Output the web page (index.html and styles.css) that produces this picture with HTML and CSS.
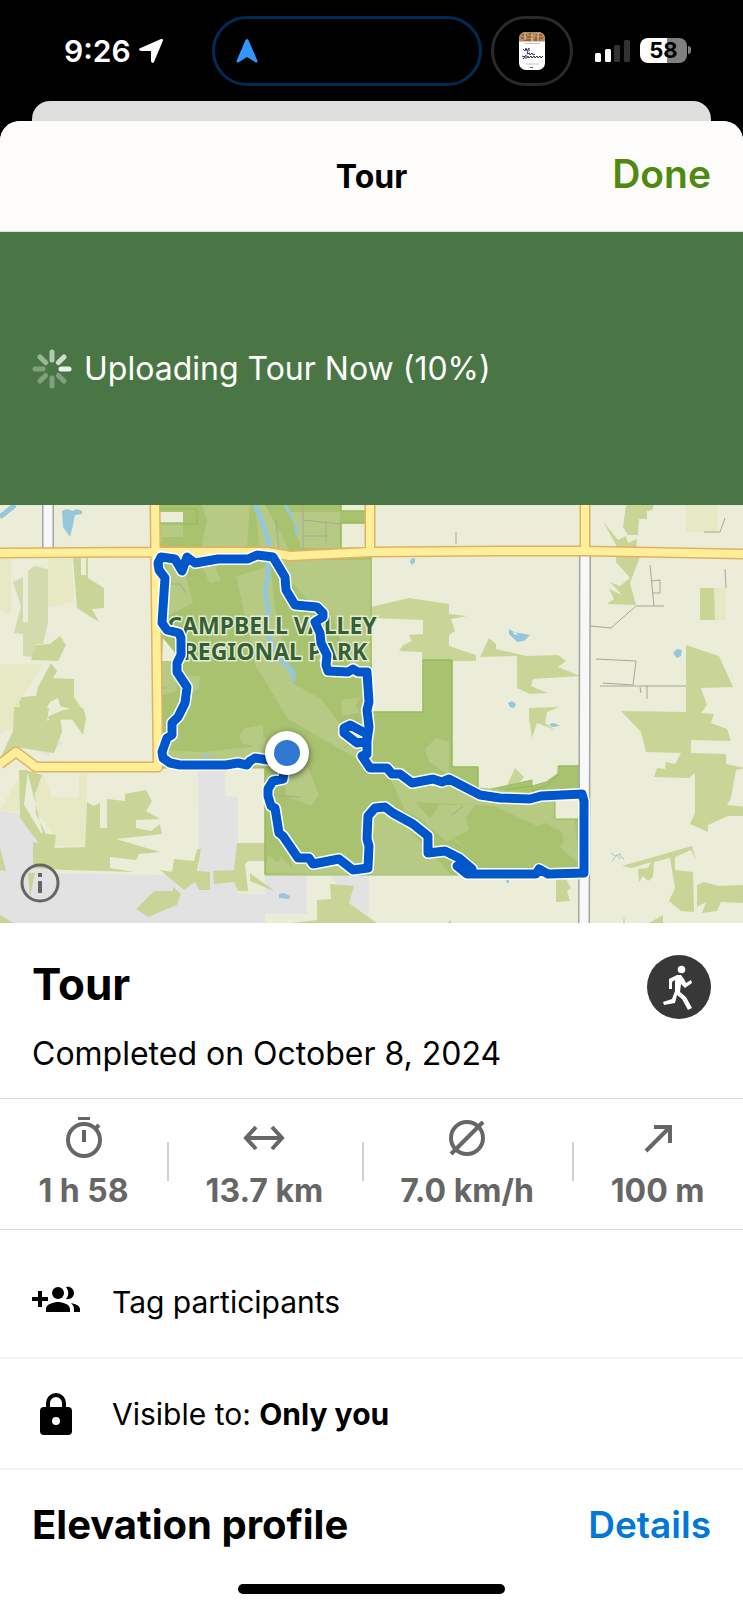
FILE: index.html
```html
<!DOCTYPE html>
<html lang="en">
<head>
  <meta charset="UTF-8" />
  <title>Tour</title>
  <meta name="viewport" content="width=device-width, initial-scale=1.0"/>
  <link rel="stylesheet" href="styles.css">
</head>
<body>
  <div class="status-bar">
    <div class="clock">
      <span>9:26</span>
      <svg class="location" viewBox="0 0 24 24"><path d="M24 1.500 15 23q-1.500 2-3-.5V12H2Q-1 11 .5 9.500L22 0q2-.5 2 1.500z" fill="#fff"/></svg>
    </div>
    <div class="island">
      <svg viewBox="0 0 22 24"><path d="M11 0q1.200 0 1.700 1.500L21.500 22q.2 2-1.700 1.500L11 18 2.200 23.500Q.3 24 .5 22L9.300 1.500Q9.800 0 11 0z" fill="#2f97ff"/></svg>
    </div>
    <div class="island-small">
      <svg viewBox="0 0 26 38">
        <rect width="26" height="38" rx="7" fill="#fff"/>
        <path d="M0 9.500V7q0-7 7-7h12q7 0 7 7v2.500z" fill="#b98a5b"/>
        <path d="M3 3h5M10 2h4M17 3h6M2 6h4M8 5h6M16 6h8M5 8h7M15 8h6" stroke="#6f4524" stroke-width="1"/>
        <path d="M6 1v7M13 1v8M19 1v8" stroke="#e4cfaa" stroke-width="1"/>
        <path d="M6 11.500h15M7 32h13" stroke="#aaa" stroke-width=".7"/>
        <path d="M4 17l2 2 1-3 1 3 2-3v3M9 19l-1 3 3-1M3 24l3 1-2 2 3-4v4" stroke="#35357e" stroke-width="1" fill="none"/>
        <path d="M10 21l1 2 2-2 1 2 2-1M8 26l1-2 1 2 2-2 1 2 2-2 1 2 2-2 1 2 2-2 1 2 2-2" stroke="#333" stroke-width="1" fill="none"/>
        <path d="M11 35.500h3" stroke="#555" stroke-width="1"/>
      </svg>
    </div>
    <div class="signal">
      <svg class="bars" viewBox="0 0 35 22">
        <rect y="13" width="6" height="9" rx="1.500" fill="#fff"/>
        <rect x="10" y="9" width="6" height="13" rx="1.500" fill="#fff"/>
        <rect x="19" y="5" width="6" height="17" rx="1.500" fill="#333"/>
        <rect x="29" width="6" height="22" rx="1.500" fill="#333"/>
      </svg>
      <div class="battery">58</div>
    </div>
  </div>

  <div class="sheet-behind"></div>
  <main class="sheet">
    <header>
      <h1>Tour</h1>
      <button class="done">Done</button>
    </header>

    <div class="upload" role="status">
      <svg viewBox="0 0 40 40" stroke="#fff" stroke-width="5" stroke-linecap="round">
        <path d="M29 20h8" opacity=".9"/>
        <path d="M26.400 13.600l5.600-5.600" opacity=".75"/>
        <path d="M20 11V3" opacity=".6"/>
        <path d="M13.600 13.600L8 8" opacity=".45"/>
        <path d="M11 20H3" opacity=".3"/>
        <path d="M13.600 26.400L8 32M20 29v8M26.400 26.400L32 32" opacity=".3"/>
      </svg>
      <span>Uploading Tour Now (10%)</span>
    </div>

    <div class="map">
      <svg class="map-canvas" viewBox="0 505 743 418">
        <defs>
          <path id="roads" d="M0 553l155-1h95l17 0 23 4 80-4 130-1h85l158 3M370 505v46M585 505v46M155 505l3 262H36l-20-15-16 12"/>
          <path id="track" d="M287 753l-7 7h-12l-13-2-5 3-3 4-9-2-12 2h-46l-10-2-7-5-1-6 5-14 5-3v-12l6-6 7-14 2-16-10-15v-9l4-8v-17l-2-5-12-3-5-7 3-45-6-8-1-7 3-6 14 2 7 12 5-14 8 6 23-4h30l9-4 16 2 12 20 1 13 9 15 22 2 6 6v4l-8 5 5 11 1 10 6 12-1 10 2 6 20 1 5-3 5 3h9l2 30-2 8 2 17-2 14-10 2-13-10v-5l6-3 17 9v20l-5 2 8 12h17l5 6h8l12 9 21-4 9 3 7-3 31 16 20 3 30 1 11-3 41-2 2 7v72l-36 1-9-5-3 5h-69l-10-8 15 3-13-11-14-7-17 2v-17l-15-12-20-11-8-6-10 1-7 8-1 23 2 7-1 22-15 2-14-11-26 5-4-6h-11l-15-22-4-3-4-25-4-2-3-10v-7l5-8 10-2z"/>
        </defs>
        <rect y="505" width="743" height="418" fill="#ebedd8"/>

        <!-- fields -->
        <g fill="#e6e9c3">
          <path d="M0 559h11v56l-11-4zM48 559h24l2 43-26 5zM0 664h43l-20 32-2 28-21 10zM0 810l17-29 5 10-4 21zM36 780l7-5 9 22h27v-24h8l-2 73H53l-1-13-16-22z"/>
          <path d="M686 505h32v27h-32zM714 588h12v32h-12z"/>
        </g>

        <!-- built-up areas -->
        <g fill="#e2e2e2">
          <path d="M0 811l20 3 27 29 4 30 110 2 10-5h28l-1-100h27v26l13 1v97h27v36h-17v13H0z"/>
          <path d="M26 744l32-20-2 16 8 3-11 6-5 7zM265 876h42v38h-42zM331 876h38v40l-20-13z"/>
          <path d="M225 771h40v19h-27l-13 5z" fill="#ebedd8"/>
        </g>

        <!-- forest -->
        <g fill="#c9d597">
          <path d="M13 582l10-5v45h5v-51l6-5 14 3v54l-5 21h-7v13l-13-1v-22l-9-1 7-27z" fill="#d3dbae"/>
          <path d="M36 645l14-1 10-8 6 9-8 16-27-1zM73 558h8v17h5v-17h2v20l16 10v20l-12 1 7 13-22-14z"/>
          <path d="M51 663l6 8-4 7 21 1v18l11 16-3 7-20-1 8-10-10-3-2-8-8 4-5 9-24 1-2-10 3-5 14-1 2-9z"/>
          <path d="M14 707l35 1-2 13 13-8 2 19-8 21-39-6-11 13-4-1 13-28zM19 770h9l-4 35 17 28 15 2-3 23-20-1v-15l4 5 1-5-18-24zM27 770l15 5-7 19 1 20 10 20 7 1v13l32-1 2-45 6 4 7-3v25h7v-29l18 2v-7l21-4 6 11-6 10 14 8-24 1v8l15 3 9-7 2 10-46 5 44 13-21 2-3 6-26-3v11l24 4-69-2-32-2V842l13 4zM63 710l20-2 3 10-3 17-11-16-13 1-3 7-9-10z"/>
          <path d="M0 848l6 23-6-1zM0 915l14 8H0zM28 873h7l-5 24zM136 909l18-18h19v-4l8 7-4 11-29 12zM160 870l12 2 2-13 20 2 3-12h4l-4 22 13 1v18h-11l-4-8-11 8zM213 871l21-1 3-27h28v18h-17l-3 3 1 9 2 18h-10l-4-9-20 2zM250 873l26 19-26-11zM330 884l24 2-5 17 28 20h-87l27-3v-20l14-1z"/>
          <path d="M371 607l38-9 40 6v10l18 2-16 3 4 12-6 4v11l27 9v6h-54v-9l-23-1 4-6 9-4-3-6 14-1v-14l-51-2zM480 657l9-19 7 6v5l31 7 31-1 8 6-8 6 22 9-47 3-2 7 17 7-18 1-13-6v-32z"/>
          <path d="M626 505h28l-2 5-5 1v8h-8l-1 16h-10l-5-8zM603 521l15 19 8-4 2 7 9-4-1 15 4 3-10 26 6 22-29-1 7-5-5-10 13 6-12-13 10 4 10-8-14-16v-17z"/>
          <path d="M700 588h14l1 32h-15zM686 645l33 11 14 31-32 1 6 17-6 8-15-1zM621 711l65 1 28 2-3 9 16 6 4 12-40-1v13l35 1v10l19 4-9 2-5 28-4 7 22 2v9h-21l-20 9v7l-18-8 5-11v-40l-6 5-35-1 3-9 8 1 1-7 9 2 6-11-35-1-5-20z"/>
          <path d="M529 708l30-1-12 5-2 11 10 7-18-7-5 15-3-20zM515 768l9 9-5 6 12 1-26 6zM622 866l70-20 4 14-5-10-16 7v13l18 2 1 40-13-1-12-10 6-13-5-30-16 4-1 15-5 4-5-5-4 6-1-13 10-1 3-6-19 6zM697 885l7-3 15 4 24-1v18l-22-1-4 9-15 2 4-11-9 5zM556 879h10l5 9-4 3 3 10-14 1zM649 923l14-8v8zM624 916l1 7h-2zM447 923l4-3v3z"/>
        </g>

        <!-- Campbell Valley park -->
        <path d="M160 505h181v6h30v12h-30v25h30v164h52v-52h29v107h26v25l27-6 27-6v6l14-4 13-9v-7h21v108H265V768H160z" fill="#a8c270" stroke="#9dbd65" stroke-width="1"/>
        <g fill="#b6ca83">
          <path d="M160 516h23v21h-20l-3 10zM202 505h48l-3 43h-46l6-28zM265 505l25 46h-30l-5-46zM290 512h50v36h-39zM167 563l18 10 8 30-28 14zM200 563l10 20 11-2-8-20zM273 560h98v110l-20-3-20-53-20-10zM162 660h18l-4 32-14 3zM186 676h14l-1 12-9 7-4-5zM258 570l12-6 6 50 10 40 8 30 27 15 45 60 40 10-14 10-104-60-32-53-20-90zM162 750l40 2 48-5 15-10 1 30H162zM245 728l18-3v22l-20-3-4-8zM285 780l22-15 12 30-8 11-25-10zM268 855l10 8 3-6 12 12-4-14 15 7 66 2 1 11-106-2zM370 811l24 1 56 62H370zM385 767l50 16 50 5 88 10 6 65-20-16 5-5-2-10-16-9-9 3-43-20-79-4 20 22 37 28-23-15-44-27zM425 749l11-11 13 4v33l-20-13zM440 805h36l-10 12 3 13-22 12-21-18zM341 700l20-3-6 9 5 7-18 2z"/>
        </g>
        <path d="M160 512h23v10h-23zM163 638l13 16-5 7h-9zM555 800h24v19h-24z" fill="#ebedd8"/>
        <path d="M160 509h37v15h-37M341 505v6h30M341 548v-25h30M371 557v155h52v-52h29v107h26v25M505 790l27-4v5l14-5 12-11v-9h21M555 800v19h24M265 768v107h314" fill="none" stroke="#8fbb58" stroke-width="1"/>

        <!-- water -->
        <g fill="none" stroke="#95c7dc" stroke-width="5">
          <path d="M0 517l15-12M255 505l8 18 6 20-1 32-3 15 3 20-2 20 9 22 12 14 6 6v9"/>
          <path d="M285 505l8 14M295 522l2 13" stroke-width="3"/>
        </g>
        <g fill="#95c7dc">
          <path d="M62 511l5-2 6 2 3-2 6 2v3l-7 1-2 10-3 12-7-10zM411 559l4-1v4l-3 3-2-3zM509 629l5 3 16 3-6 6-7 1-8-8zM673 653l4-4 5 1-1 6-4 2zM508 703l4-2 4 3-2 4-4-1zM549 724l5-1 6 3-8 1zM279 894l5-1 6 3-1 3-10-1zM203 757l4-4 3 3-4 3zM506 879h3v4h-2z"/>
          <path d="M513 632l3 1 2 2-4-1z" fill="#fff"/>
        </g>
        <path d="M611 853l4 3 5-2 1 3 3 2M612 861l5-6 3 4" fill="none" stroke="#95c7dc" stroke-width="1"/>

        <!-- small paths -->
        <path d="M303 505v48M303 520l37 4M303 536h24M326 521v21M276 520l3 30M171 584h9l6 9M162 688h5M330 625l10 19M274 795l26 2M452 815l11-9M344 748l4-3M456 532v12M650 565l4 41M652 581l8-1v13h-8M591 626l20 2 25-22h28M596 659l40 2-3 24-30-2M600 686h86M640 687l1 6M647 685v14M704 532h16l5-14M725 569l1 19" fill="none" stroke="#a5a898" stroke-width="1"/>

        <!-- roads -->
        <g fill="none" stroke-linejoin="round">
          <path d="M48 505v48M585 552l-1 371" stroke="#a5a5a5" stroke-width="12"/>
          <path d="M48 505v48M585 552l-1 371" stroke="#f8f8f8" stroke-width="9"/>
          <use href="#roads" stroke="#e4b062" stroke-width="11"/>
          <use href="#roads" stroke="#ffef98" stroke-width="8"/>
        </g>

        <text class="map-label">
          <tspan x="275" y="634">CAMPBELL VALLEY</tspan>
          <tspan x="275" y="660">REGIONAL PARK</tspan>
        </text>

        <!-- recorded track -->
        <g fill="none" stroke-linejoin="round" stroke-linecap="round">
          <use href="#track" stroke="#fff" stroke-width="12"/>
          <use href="#track" stroke="#0057cc" stroke-width="9"/>
        </g>
        <circle class="marker" cx="287" cy="753" r="22" fill="#fff"/>
        <circle cx="287" cy="753" r="13" fill="#2f77d0"/>
      </svg>
      <button class="info" aria-label="Map information">
        <svg viewBox="0 0 40 40"><circle cx="20" cy="20" r="18" fill="none" stroke="#666" stroke-width="3"/><path d="M18 10h4v4h-4zM18 18h4v12h-4z" fill="#666"/></svg>
      </button>
    </div>

    <section class="summary">
      <div>
        <h2>Tour</h2>
        <p>Completed on October 8, 2024</p>
      </div>
      <svg class="sport" viewBox="0 0 64 64">
        <circle cx="32" cy="32" r="32" fill="#383838"/>
        <circle cx="34.500" cy="14.500" r="3.800" fill="#fff"/>
        <path d="M22 24l8-4h4l3 4 2 4 5-3 1 3-7 5-4-4-1 8 6 5 6 11-4 2-6-11-5-4-2 8-11 2-1-3 9-3 3-8v-11l-3 2v7h-3z" fill="#fff"/>
      </svg>
    </section>

    <section class="stats">
      <div class="stat">
        <svg viewBox="0 0 44 44"><path d="M16 2h12v3H16z" fill="#666" stroke="none"/><circle cx="22" cy="25" r="16"/><path d="M33 14l4-4M22 15v12"/></svg>
        <span>1 h 58</span>
      </div>
      <div class="stat">
        <svg viewBox="0 0 44 44"><path d="M4 23h36M14 12L4 23l10 11M30 12l10 11-10 11"/></svg>
        <span>13.7 km</span>
      </div>
      <div class="stat">
        <svg viewBox="0 0 44 44"><circle cx="22" cy="23" r="16"/><path d="M6 39L38 7"/></svg>
        <span>7.0 km/h</span>
      </div>
      <div class="stat">
        <svg viewBox="0 0 44 44"><path d="M10 36l23-23M18 12h16v16"/></svg>
        <span>100 m</span>
      </div>
    </section>

    <button class="row row-tag">
      <svg viewBox="0 0 48 48"><path d="M6 13h4v6h6v4h-6v6H6v-6H0v-4h6zM14 34v-3c0-5 8-7 12-7s12 2 12 7v3z"/><circle cx="26" cy="15" r="6"/><path d="M34 9c4-1 8 2 8 6s-4 7-8 6c3-4 3-8 0-12zM39 25c5 1 9 3 9 6v3h-6v-3c0-2-1-4-3-6z"/></svg>
      <span>Tag participants</span>
    </button>
    <button class="row">
      <svg viewBox="0 0 48 48"><path d="M36 17h-2v-4a10 10 0 0 0-20 0v4h-2a4 4 0 0 0-4 4v20a4 4 0 0 0 4 4h24a4 4 0 0 0 4-4V21a4 4 0 0 0-4-4zM24 35a4 4 0 1 1 0-8 4 4 0 0 1 0 8zm6-18H18v-4a6 6 0 0 1 12 0z"/></svg>
      <span>Visible to: <strong>Only you</strong></span>
    </button>

    <section class="elevation">
      <h3>Elevation profile</h3>
      <a href="#details">Details</a>
    </section>
    <div class="home-indicator"></div>
  </main>
</body>
</html>
```

FILE: styles.css
```css
* {
  box-sizing: border-box;
}

body {
  font-family: Inter, sans-serif;
  background-color: #000;
  color: #000;
  margin: 0;
}

h1, h2, h3, p {
  margin: 0;
}

button {
  font-family: inherit;
  border: none;
  background: none;
  padding: 0;
  cursor: pointer;
}

svg {
  display: block;
}

/* Status bar */
.status-bar {
  height: 101px;
  padding: 0 56px 0 64px;
  display: flex;
  align-items: center;
  color: #fff;
}

.clock {
  flex: 1;
  display: flex;
  align-items: center;
  gap: 8px;
  font-size: 30px;
  font-weight: 600;
}

.location {
  width: 24px;
  height: 24px;
}

.island {
  width: 270px;
  height: 70px;
  border: 3px solid #002b55;
  border-radius: 35px;
  padding-left: 21px;
  display: flex;
  align-items: center;
}

.island svg {
  width: 22px;
  height: 24px;
}

.island-small {
  width: 82px;
  height: 70px;
  margin: 0 22px 0 9px;
  border: 3px solid #2a2a2a;
  border-radius: 35px;
  display: flex;
  align-items: center;
  justify-content: center;
}

.island-small svg {
  width: 26px;
  height: 38px;
}

.signal {
  display: flex;
  align-items: center;
  gap: 10px;
}

.bars {
  width: 35px;
  height: 22px;
}

.battery {
  position: relative;
  width: 47px;
  height: 25px;
  border-radius: 8px;
  background: linear-gradient(90deg, #fff 58%, #808080 58%);
  color: #000;
  font-size: 22px;
  font-weight: 700;
  line-height: 25px;
  text-align: center;
}

.battery::after {
  content: "";
  position: absolute;
  right: -4px;
  top: 8px;
  width: 3px;
  height: 8px;
  border-radius: 0 4px 4px 0;
  background-color: #808080;
}

/* Sheet */
.sheet-behind {
  height: 20px;
  margin: 0 32px;
  border-radius: 18px 18px 0 0;
  background-color: #dededc;
}

.sheet {
  background-color: #fff;
  border-radius: 20px 20px 0 0;
  overflow: hidden;
}

header {
  height: 111px;
  padding: 0 32px;
  display: grid;
  grid-template-columns: 1fr auto 1fr;
  align-items: center;
  background-color: #fdfcfb;
  border-bottom: 1px solid #dcdcda;
}

header h1 {
  grid-column: 2;
  font-size: 32px;
  font-weight: 700;
}

.done {
  justify-self: end;
  padding-bottom: 4px;
  color: #4f8a10;
  font-size: 39px;
  font-weight: 600;
  line-height: 48px;
}

.upload {
  height: 273px;
  padding: 0 32px;
  display: flex;
  align-items: center;
  gap: 12px;
  background-color: #4a7645;
  color: #fff;
  font-size: 32px;
}

.upload svg {
  width: 40px;
  height: 40px;
}

/* Map */
.map {
  position: relative;
}

.map-canvas {
  width: 100%;
}

.map-label {
  font-family: "Noto Sans", sans-serif;
  font-size: 23px;
  font-weight: 700;
  text-anchor: middle;
  fill: #355f35;
  stroke: #e3ebd0;
  stroke-width: 3px;
  paint-order: stroke;
}

.marker {
  filter: drop-shadow(0 2px 3px rgba(0, 0, 0, 0.6));
}

.info {
  position: absolute;
  left: 20px;
  bottom: 20px;
}

.info svg {
  width: 40px;
  height: 40px;
}

/* Tour summary */
.summary {
  padding: 32px 32px 24px;
  display: flex;
  justify-content: space-between;
}

.summary h2 {
  font-size: 44px;
  font-weight: 700;
  line-height: 58px;
}

.summary p {
  margin-top: 21px;
  font-size: 32px;
  line-height: 40px;
}

.sport {
  width: 64px;
  height: 64px;
}

.stats {
  height: 132px;
  display: flex;
  border-top: 1px solid #d8d8d8;
  border-bottom: 1px solid #d8d8d8;
}

.stat {
  position: relative;
  flex: 1 1 auto;
  padding-top: 16px;
  display: flex;
  flex-direction: column;
  align-items: center;
  gap: 12px;
  color: #666;
  font-size: 32px;
  font-weight: 700;
  line-height: 40px;
}

.stat + .stat::before {
  content: "";
  position: absolute;
  left: 0;
  top: 43px;
  width: 2px;
  height: 39px;
  background-color: #d0d0d0;
}

.stat svg {
  width: 44px;
  height: 44px;
  fill: none;
  stroke: #666;
  stroke-width: 4px;
}

/* Rows */
.row {
  width: 100%;
  height: 111px;
  padding: 0 32px;
  display: flex;
  align-items: center;
  gap: 32px;
  border-bottom: 2px solid #f3f4ea;
  color: #000;
  font-size: 30px;
  text-align: left;
}

.row-tag {
  height: 129px;
  padding-top: 16px;
}

.row svg {
  width: 48px;
  height: 48px;
}

.elevation {
  padding: 31px 32px 0;
  display: flex;
  justify-content: space-between;
  align-items: center;
  line-height: 48px;
}

.elevation h3 {
  font-size: 40px;
  font-weight: 700;
}

.elevation a {
  color: #0078d8;
  font-size: 37px;
  font-weight: 600;
  text-decoration: none;
}

.home-indicator {
  width: 36%;
  height: 10px;
  margin: 35px auto 16px;
  border-radius: 5px;
  background-color: #000;
}
```
